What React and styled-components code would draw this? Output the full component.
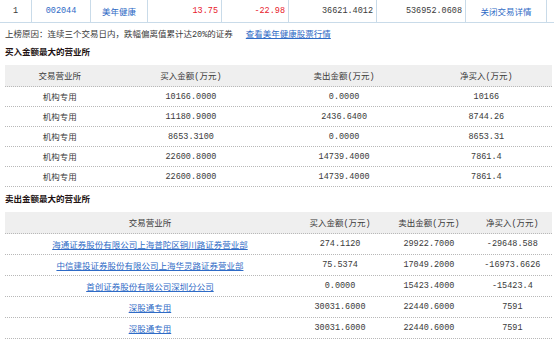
import React from 'react';
import styled, { createGlobalStyle } from 'styled-components';

const GlobalStyle = createGlobalStyle`
  body {
    margin: 0;
    background: #fff;
    font-family: "Liberation Mono", "Noto Sans CJK SC", monospace;
    font-size: 8.5px;
    color: #3a3a3a;
  }
`;

const topCells = [
  { text: '1', w: 32, align: 'center' },
  { text: '002044', w: 59, align: 'center', link: true },
  { text: '美年健康', w: 57, align: 'center', link: true },
  { text: '13.75', w: 74, align: 'right', red: true },
  { text: '-22.98', w: 67, align: 'right', red: true },
  { text: '36621.4012', w: 88, align: 'right' },
  { text: '536952.0608', w: 89, align: 'right' },
  { text: '关闭交易详情', w: 81, align: 'center', link: true },
];

const buyCols = ['20%', '28%', '28%', '24%'];
const buyRows = [
  ['机构专用', '10166.0000', '0.0000', '10166'],
  ['机构专用', '11180.9000', '2436.6400', '8744.26'],
  ['机构专用', '8653.3100', '0.0000', '8653.31'],
  ['机构专用', '22600.8000', '14739.4000', '7861.4'],
  ['机构专用', '22600.8000', '14739.4000', '7861.4'],
];

const sellCols = ['53%', '16.5%', '16%', '14.5%'];
const sellRows = [
  ['海通证券股份有限公司上海普陀区铜川路证券营业部', '274.1120', '29922.7000', '-29648.588'],
  ['中信建投证券股份有限公司上海华灵路证券营业部', '75.5374', '17049.2000', '-16973.6626'],
  ['首创证券股份有限公司深圳分公司', '0.0000', '15423.4000', '-15423.4'],
  ['深股通专用', '30031.6000', '22440.6000', '7591'],
  ['深股通专用', '30031.6000', '22440.6000', '7591'],
];

function DealTable({ cols, head, rows, linkFirst, rowH }) {
  return (
    <Table>
      <HeadRow>
        {head.map((h, i) => (
          <Cell key={i} style={{ width: cols[i] }}>{h}</Cell>
        ))}
      </HeadRow>
      {rows.map((r, ri) => (
        <Row key={ri} $h={rowH}>
          {r.map((c, ci) => (
            <Cell key={ci} style={{ width: cols[ci] }}>
              {ci === 0 && linkFirst ? <UnderLink>{c}</UnderLink> : c}
            </Cell>
          ))}
        </Row>
      ))}
    </Table>
  );
}

function App() {
  return (
    <Page>
      <GlobalStyle />
      <TopRow>
        {topCells.map((c, i) => (
          <TopCell key={i} $w={c.w} $align={c.align} $red={c.red} $link={c.link}>
            {c.text}
          </TopCell>
        ))}
      </TopRow>

      <Reason>
        <span>上榜原因：连续三个交易日内，跌幅偏离值累计达20%的证券</span>
        <UnderLink>查看美年健康股票行情</UnderLink>
      </Reason>

      <SectionTitle>买入金额最大的营业所</SectionTitle>
      <DealTable
        cols={buyCols}
        head={['交易营业所', '买入金额(万元)', '卖出金额(万元)', '净买入(万元)']}
        rows={buyRows}
        rowH={20}
      />

      <SectionTitle $top={6}>卖出金额最大的营业所</SectionTitle>
      <DealTable
        cols={sellCols}
        head={['交易营业所', '买入金额(万元)', '卖出金额(万元)', '净买入(万元)']}
        rows={sellRows}
        linkFirst
        rowH={21}
      />
    </Page>
  );
}

export default App;

const Page = styled.div`
  width: 554px;
  height: 339px;
  overflow: hidden;
`;

const TopRow = styled.div`
  display: flex;
  height: 22px;
  border-bottom: 1px solid #c9dbe9;
`;

const TopCell = styled.div`
  width: ${(p) => p.$w}px;
  flex: none;
  display: flex;
  align-items: center;
  justify-content: ${(p) => (p.$align === 'right' ? 'flex-end' : 'center')};
  padding-right: ${(p) => (p.$align === 'right' ? '3px' : '0')};
  box-sizing: border-box;
  border-right: 1px solid #c9dbe9;
  color: ${(p) => (p.$red ? '#e8202a' : p.$link ? '#2f6bc6' : '#3a3a3a')};
`;

const Reason = styled.div`
  display: flex;
  gap: 13px;
  margin-top: 5px;
  padding-left: 5px;
  line-height: 14px;
  white-space: nowrap;
`;

const UnderLink = styled.a`
  color: #2f6bc6;
  text-decoration: underline;
  cursor: pointer;
`;

const SectionTitle = styled.div`
  margin-top: ${(p) => p.$top || 4}px;
  padding-left: 5px;
  line-height: 14px;
  font-weight: bold;
  color: #221212;
`;

const Table = styled.div`
  margin: 5px 2px 0 5px;
  display: flex;
  flex-direction: column;
`;

const HeadRow = styled.div`
  display: flex;
  height: 21px;
  background: #efefef;
  border-bottom: 1px dotted #b8b8b8;
`;

const Row = styled.div`
  display: flex;
  height: ${(p) => p.$h - 1}px;
  border-bottom: 1px dotted #b8b8b8;
`;

const Cell = styled.div`
  flex: none;
  display: flex;
  align-items: center;
  justify-content: center;
  white-space: nowrap;
`;
